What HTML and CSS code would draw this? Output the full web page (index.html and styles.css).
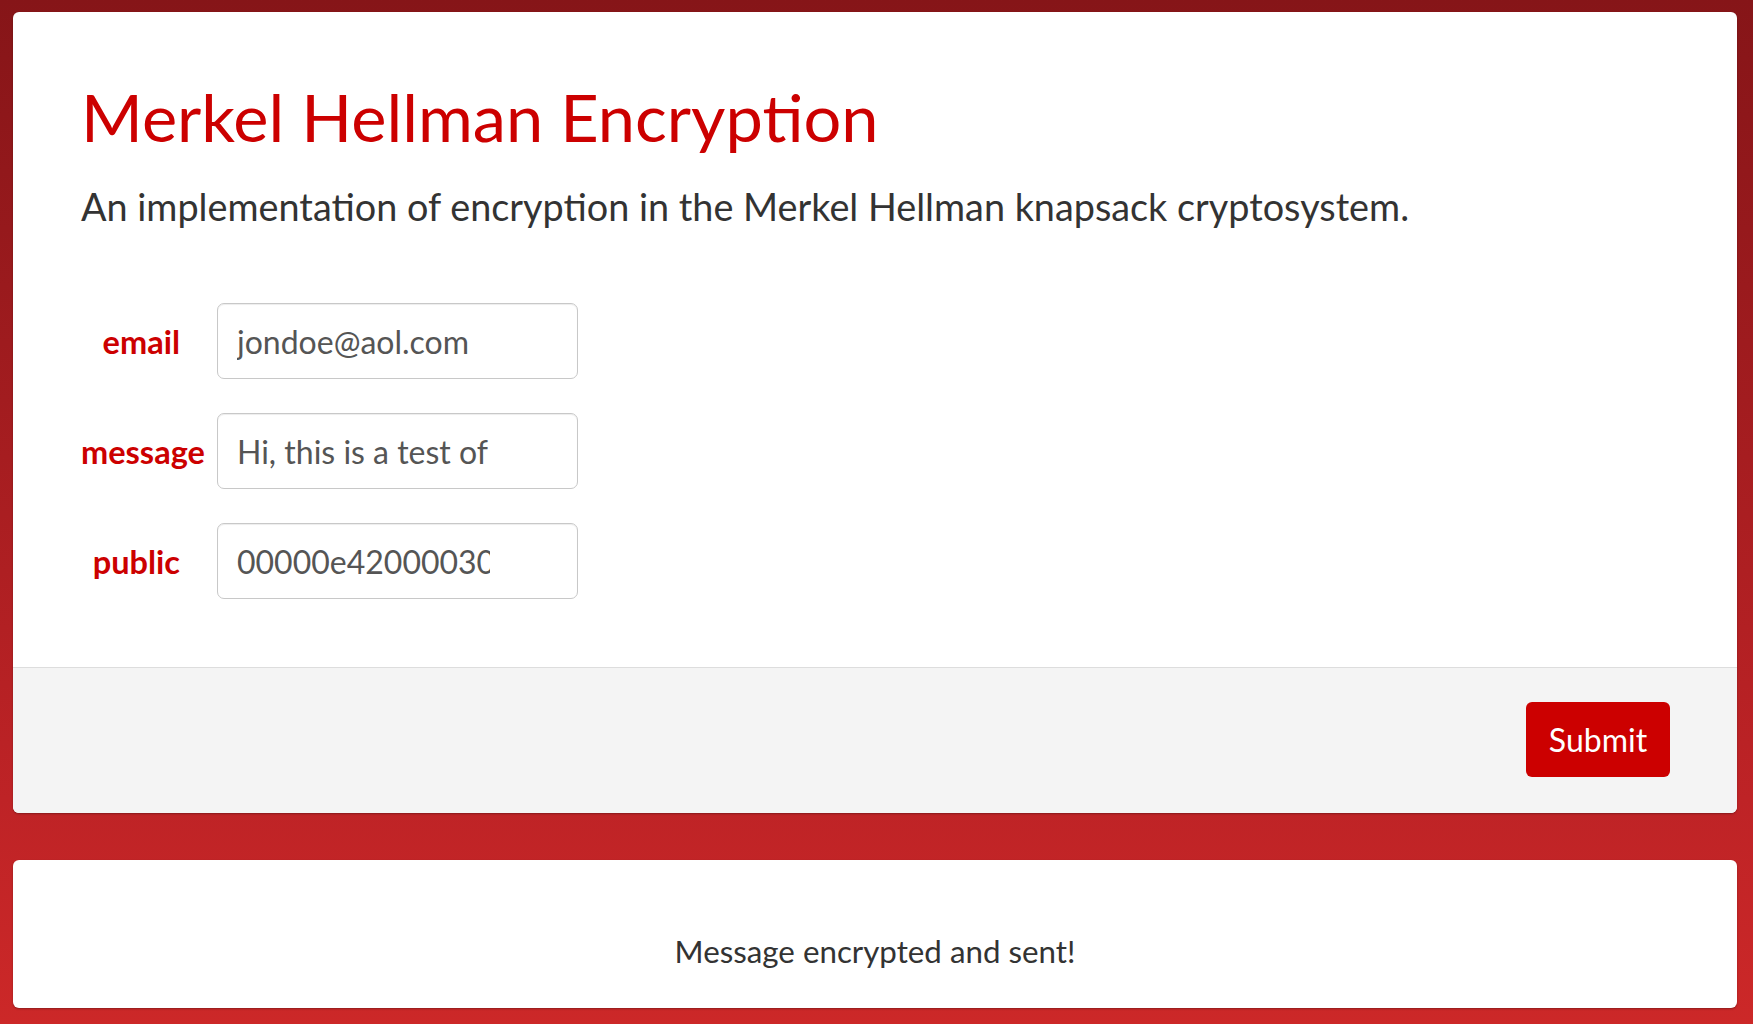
FILE: index.html
```html
<!DOCTYPE html>
<html lang="en">
<head>
    <meta charset="UTF-8">
    <meta name="viewport" content="width=device-width, initial-scale=1.0">
    <title>Merkel Hellman Encryption</title>
    <link rel="stylesheet" href="styles.css">
</head>
<body>

    <div class="page">
        <!-- Encryption form -->
        <div class="card">
            <div class="card-body">
                <h1 class="title">Merkel Hellman Encryption</h1>
                <p class="lead">An implementation of encryption in the Merkel Hellman knapsack cryptosystem.</p>

                <form class="form" id="encryptForm">
                    <label for="email">email</label>
                    <input type="text" id="email" value="jondoe@aol.com">

                    <label for="message">message</label>
                    <input type="text" id="message" value="Hi, this is a test of the system">

                    <label for="public">public</label>
                    <input type="text" id="public" value="00000e42000030c5d1a0">
                </form>
            </div>
            <div class="card-footer">
                <button type="submit" form="encryptForm" class="btn">Submit</button>
            </div>
        </div>

        <!-- Status -->
        <div class="card status">
            <p>Message encrypted and sent!</p>
        </div>
    </div>

</body>
</html>
```

FILE: styles.css
```css
/* Reset */
* {
    margin: 0;
    padding: 0;
    box-sizing: border-box;
    font-family: 'Lato', 'Liberation Sans', sans-serif;
}

body {
    background: linear-gradient(180deg, #861518 0%, #be2326 78%, #cc2828 100%);
    min-height: 100vh;
}

.page {
    padding: 12px 16px 0 13px;
    display: flex;
    flex-direction: column;
    gap: 47px;
}

/* Cards */
.card {
    background: #ffffff;
    border-radius: 6px;
    box-shadow: 0 1px 2px rgba(0, 0, 0, 0.3);
    overflow: hidden;
}

.card-body {
    padding: 68px 68px 68px;
}

.title {
    color: #cc0000;
    font-size: 66.7px;
    font-weight: 400;
    line-height: 1.1;
}

.lead {
    color: #333333;
    font-size: 37.8px;
    line-height: 1.3;
    margin-top: 29px;
    margin-bottom: 72px;
}

/* Form rows */
.form {
    display: grid;
    grid-template-columns: 99px 361px;
    column-gap: 37px;
    row-gap: 34px;
    align-items: center;
}

.form label {
    color: #cc0000;
    font-size: 32.5px;
    font-weight: 700;
    text-align: right;
    white-space: nowrap;
}

.form input {
    height: 76px;
    padding: 0 87px 0 19px;
    border: 1px solid #c8c8c8;
    border-radius: 7px;
    box-shadow: inset 0 1px 1px rgba(0, 0, 0, 0.075);
    font-size: 32px;
    color: #555555;
    outline: none;
}

.card-footer {
    background: #f4f4f4;
    border-top: 1px solid #dddddd;
    padding: 34px 67px 36px;
    display: flex;
    justify-content: flex-end;
}

.btn {
    width: 144px;
    height: 75px;
    border: none;
    border-radius: 6px;
    background: #cc0000;
    color: #ffffff;
    font-size: 32px;
    cursor: pointer;
}

/* Status card */
.status {
    height: 148px;
    padding-top: 71px;
    text-align: center;
}

.status p {
    color: #333333;
    font-size: 31.3px;
    line-height: 1.3;
}
```
